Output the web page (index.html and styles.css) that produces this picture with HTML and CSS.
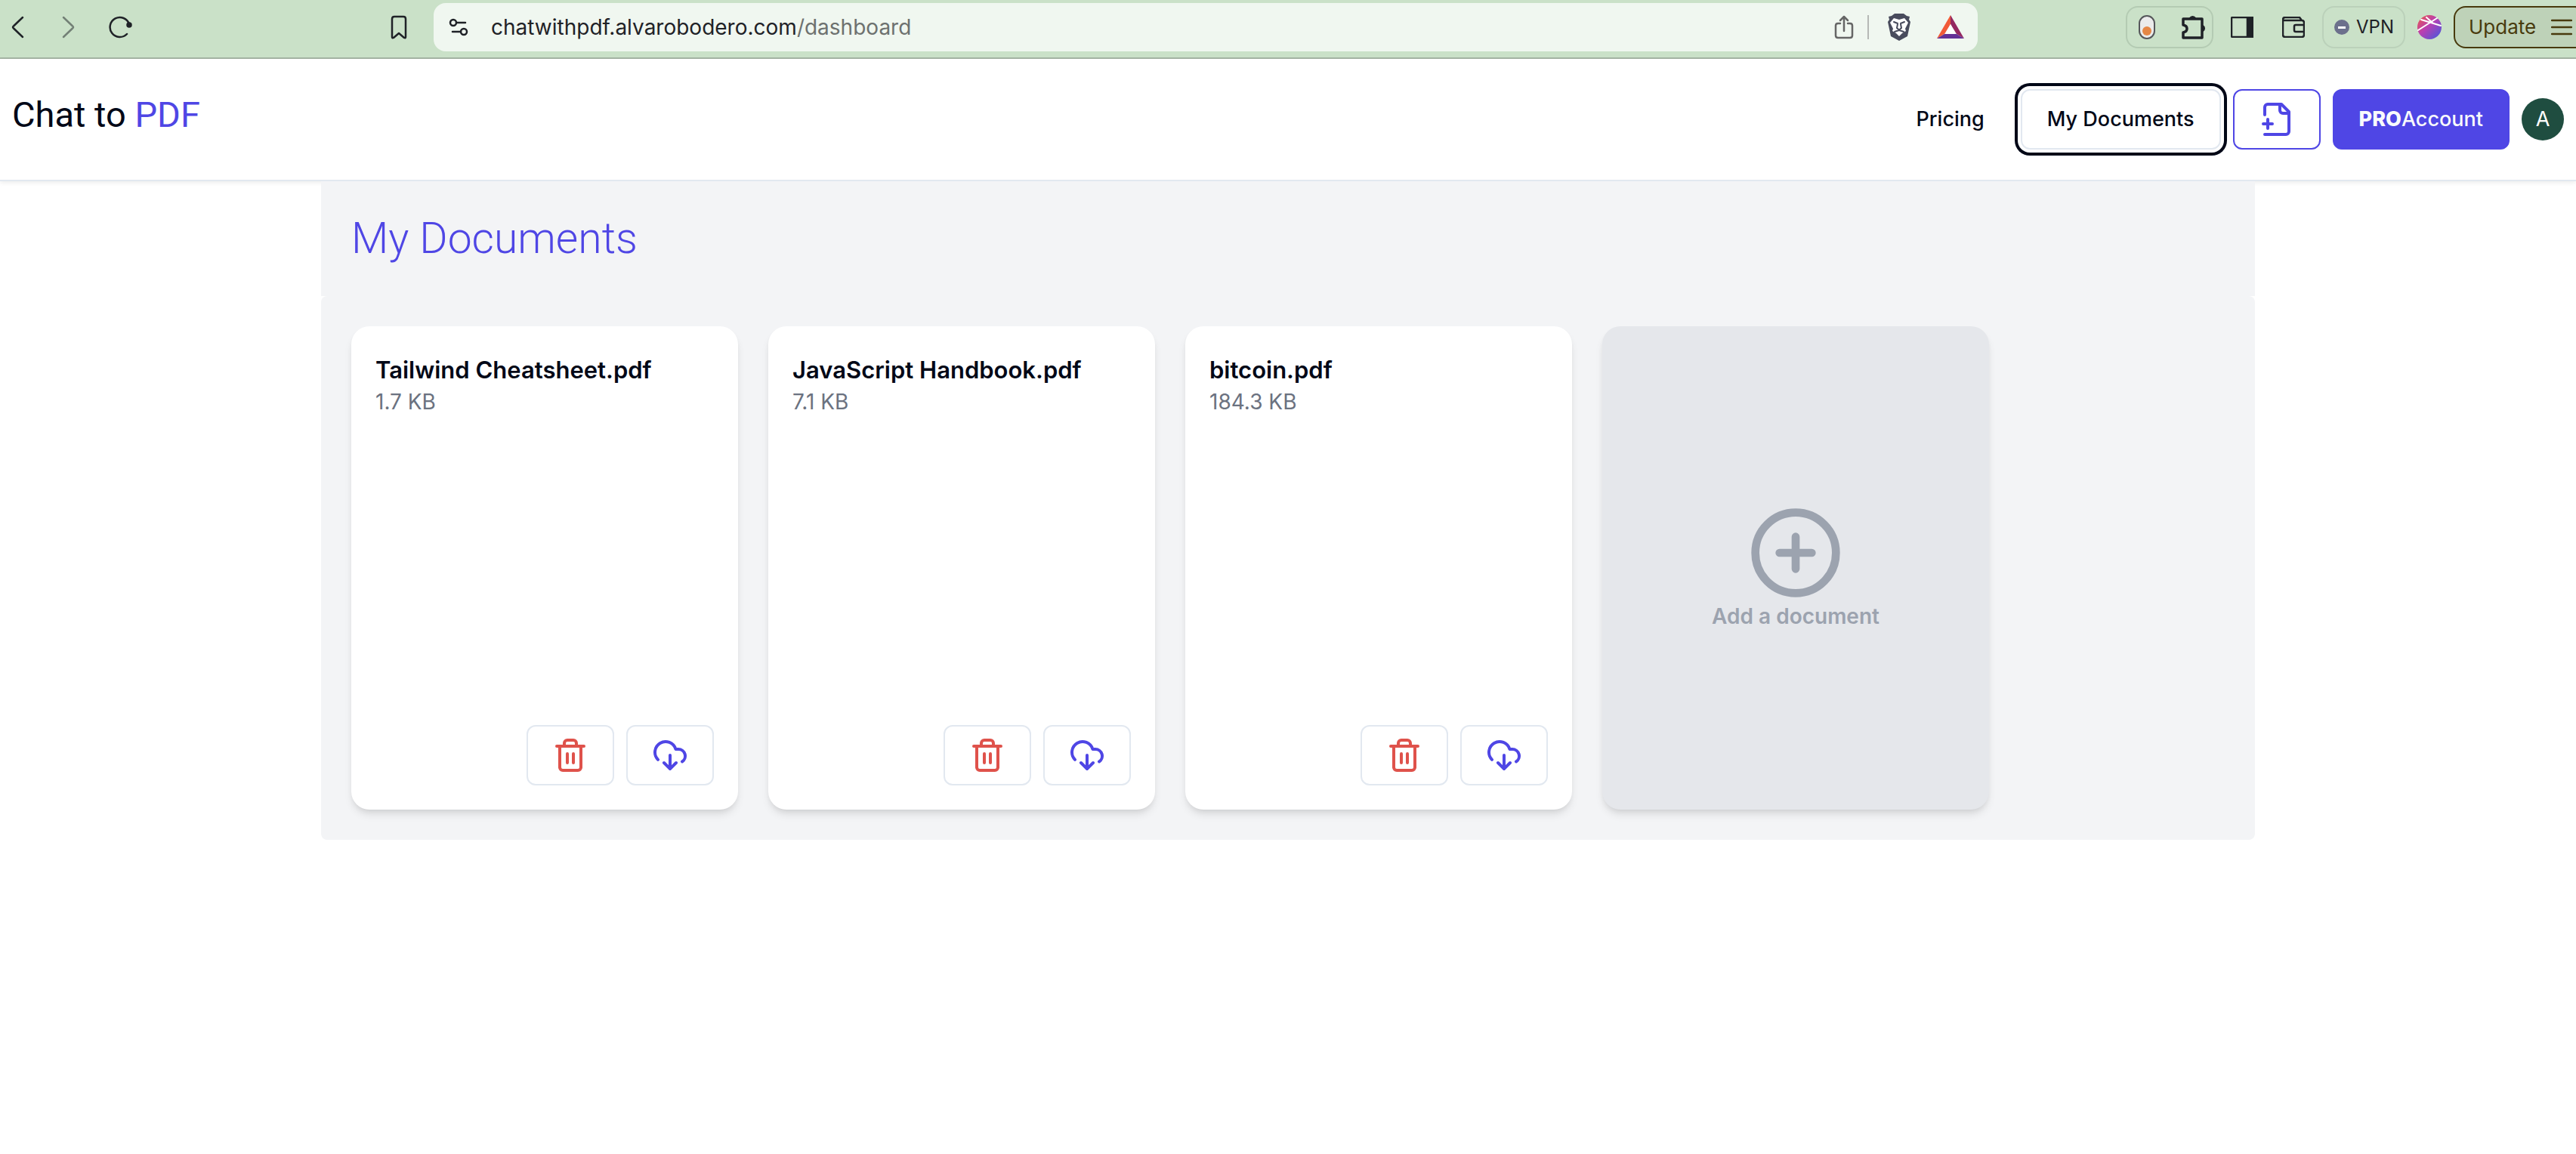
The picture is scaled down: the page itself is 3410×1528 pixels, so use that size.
FILE: index.html
```html
<!DOCTYPE html>
<html lang="en">
<head>
<meta charset="utf-8">
<title>Chat to PDF</title>
<link rel="stylesheet" href="styles.css">
</head>
<body>
<svg class="sprite" aria-hidden="true">
  <symbol id="trash" viewBox="0 0 24 24"><path d="M3 6h18M19 6v14a2 2 0 0 1-2 2H7a2 2 0 0 1-2-2V6M8 6V4a2 2 0 0 1 2-2h4a2 2 0 0 1 2 2v2M10 11v6M14 11v6"/></symbol>
  <symbol id="cloud" viewBox="0 0 24 24"><path d="M4 14.899A7 7 0 1 1 15.710 8h1.790a4.500 4.500 0 0 1 2.500 8.242M12 12v9M8 17l4 4 4-4"/></symbol>
</svg>

<div class="toolbar">
  <div class="tools-left">
    <button class="tool" aria-label="Back"><svg width="24" height="32" viewBox="0 0 24 32"><path d="M18 3 6 14.500q-2 1.500 0 3L18 29"/></svg></button>
    <button class="tool faded" aria-label="Forward"><svg width="24" height="32" viewBox="0 0 24 32"><path d="m6 3 12 11.500q2 1.500 0 3L6 29"/></svg></button>
    <button class="tool" aria-label="Reload"><svg width="32" height="32" viewBox="0 0 32 32"><path d="M24 25A13 13 0 1 1 27 12"/><circle cx="27" cy="13" r="2.500" class="solid"/></svg></button>
    <button class="tool bookmark" aria-label="Bookmark"><svg width="24" height="32" viewBox="0 0 24 32"><path d="M3 5q0-3 3-3h12q3 0 3 3v24q0 2-2 1l-7-6-7 6q-2 1-2-1z"/></svg></button>
  </div>
  <div class="address">
    <svg width="28" height="28" viewBox="0 0 28 28"><circle cx="6" cy="8" r="4"/><path d="M11 8h11M5 20h11"/><circle cx="20" cy="20" r="4"/></svg>
    <span class="url">chatwithpdf.alvarobodero.com<span class="path">/dashboard</span></span>
    <svg class="share" width="32" height="34" viewBox="0 0 32 34"><path d="M12 12H9q-3 0-3 3v13q0 3 3 3h16q3 0 3-3V15q0-3-3-3h-3M17 22V3M12 8l5-5 5 5"/></svg>
    <span class="divider"></span>
    <svg class="brave" width="32" height="36" viewBox="0 0 32 36"><path fill="#484b5c" d="M10 0h12l4 3 4 1-1 4 2 3-4 19-11 6-11-6-4-19 2-3-1-4 4-1z"/><path fill="#fff" d="m9 6 7 2 7-2 5 6-4 8 1 3-5 3-4 4-4-4-5-3 1-3-4-8z"/><path class="mane" d="m9 11 5 2M23 11l-5 2M14 14l-1 5 3 3 3-3-1-5M10 24l6-2 6 2"/></svg>
    <svg class="bat" width="36" height="32" viewBox="0 0 36 32"><path fill="#f15a38" d="M18 0v12l-8 13L0 31z"/><path fill="#942861" d="m18 0 18 31-10-6-8-13z"/><path fill="#643096" d="M0 31 10 25h16l10 6z"/><path fill="#fff" d="m18 12 7 13H11z"/></svg>
  </div>
  <div class="tools-right">
    <div class="group extensions">
      <svg width="22" height="32" viewBox="0 0 22 32"><rect x="1" y="1" width="20" height="30" rx="10" fill="#ebebeb" stroke="#55565a" stroke-width="2"/><circle cx="11" cy="21" r="6" fill="#e58746"/></svg>
      <svg width="34" height="34" viewBox="0 0 34 34"><path class="thick" d="M3 6h25v25H3v-7q5-1 5-5t-5-5z"/><path class="blob" d="M12 5a4 4 0 0 1 7 0zM29 15a4 4 0 0 1 0 7z"/></svg>
    </div>
    <svg class="side" width="30" height="28" viewBox="0 0 30 28"><rect x="1" y="1" width="28" height="26" rx="1"/><path class="solid" d="M22 1h7v26h-7z"/></svg>
    <svg class="wallet" width="30" height="28" viewBox="0 0 30 28"><path d="M26 5 23 1H4Q1 1 1 4v20q0 3 3 3h22q3 0 3-3V8q0-3-3-3H1M29 11H18q-2 0-2 2v5q0 2 2 2h11"/></svg>
    <button class="group vpn"><svg width="20" height="20" viewBox="0 0 20 20"><circle cx="10" cy="10" r="10" fill="#6c708c"/><path d="M5 9h10v3H5z" fill="#fff"/></svg>VPN</button>
    <svg class="ball" width="32" height="32" viewBox="0 0 32 32"><defs><linearGradient id="g" x1="0" y1="0" x2="1" y2="1"><stop offset="0" stop-color="#ef5a43"/><stop offset=".45" stop-color="#b93fb2"/><stop offset="1" stop-color="#3e5ae0"/></linearGradient></defs><circle cx="16" cy="16" r="16" fill="url(#g)"/><path class="seam" d="M5 6l26 8M1 20 26 4M12 3l9 8"/></svg>
    <button class="update">Update<svg width="28" height="24" viewBox="0 0 28 24"><path d="M1 3h26M1 12h26M1 21h26"/></svg></button>
  </div>
</div>

<header class="header">
  <a class="logo" href="#">Chat to <span>PDF</span></a>
  <nav class="nav">
    <a class="link" href="#">Pricing</a>
    <a class="btn wide focused" href="#">My Documents</a>
    <button class="btn accent" aria-label="New document"><svg class="icon" viewBox="0 0 24 24"><path d="M4 9V4a2 2 0 0 1 2-2h9l5 5v13a2 2 0 0 1-2 2H4M14 2v4a2 2 0 0 0 2 2h4M3 15h6M6 12v6"/></svg></button>
    <button class="btn wide pro"><b>PRO</b>Account</button>
    <button class="avatar">A</button>
  </nav>
</header>

<main class="container">
  <h1 class="title">My Documents</h1>
  <div class="grid">
    <article class="card">
      <h2>Tailwind Cheatsheet.pdf</h2>
      <p>1.7 KB</p>
      <div class="actions">
        <button class="btn danger" aria-label="Delete"><svg class="icon"><use href="#trash"/></svg></button>
        <button class="btn save" aria-label="Download"><svg class="icon"><use href="#cloud"/></svg></button>
      </div>
    </article>
    <article class="card">
      <h2>JavaScript Handbook.pdf</h2>
      <p>7.1 KB</p>
      <div class="actions">
        <button class="btn danger" aria-label="Delete"><svg class="icon"><use href="#trash"/></svg></button>
        <button class="btn save" aria-label="Download"><svg class="icon"><use href="#cloud"/></svg></button>
      </div>
    </article>
    <article class="card">
      <h2>bitcoin.pdf</h2>
      <p>184.3 KB</p>
      <div class="actions">
        <button class="btn danger" aria-label="Delete"><svg class="icon"><use href="#trash"/></svg></button>
        <button class="btn save" aria-label="Download"><svg class="icon"><use href="#cloud"/></svg></button>
      </div>
    </article>
    <button class="card add">
      <svg viewBox="0 0 24 24"><circle cx="12" cy="12" r="10"/><path d="M8 12h8M12 8v8"/></svg>
      Add a document
    </button>
  </div>
</main>
</body>
</html>
```
FILE: styles.css
```css
* { box-sizing: border-box; }
body { margin: 0; background: #fff; color: #020817; font: 28px/40px Inter, "Liberation Sans", sans-serif; }
button { font: inherit; color: inherit; margin: 0; padding: 0; border: 0; background: none; }
a { color: inherit; text-decoration: none; }
svg { display: block; flex: none; fill: none; stroke-linecap: round; stroke-linejoin: round; }
.sprite { position: absolute; width: 0; height: 0; }

/* Browser toolbar */
.toolbar { display: flex; align-items: center; height: 78px; padding-bottom: 4px; background: #cae1c8; border-bottom: 2px solid #a6b5a5; color: #1f2227; overflow: hidden; }
.toolbar svg { stroke: #1f2227; stroke-width: 2.5; }
.toolbar .solid { fill: #1f2227; }
.toolbar .blob { fill: #1f2227; stroke-width: 2; }
.toolbar .thick { stroke-width: 3.5; }
.tools-left { display: flex; align-items: center; gap: 42px; flex: none; width: 574px; padding: 0 34px 0 12px; }
.faded { opacity: .5; }
.bookmark { margin-left: auto; }
.address { display: flex; align-items: center; flex: 1; height: 64px; padding: 0 18px 0 20px; border-radius: 16px; background: #f0f7f0; }
.url { flex: 1; margin-left: 28px; }
.path { color: #6d716f; }
.toolbar .share { stroke: #666; }
.divider { width: 2px; height: 32px; margin: 0 24px 0 16px; background: #b6b9b6; }
.toolbar .brave, .toolbar .bat { stroke: none; }
.toolbar .mane { stroke: #484b5c; stroke-width: 2; }
.bat { margin-left: 34px; }
.tools-right { display: flex; align-items: center; flex: none; width: 792px; padding-left: 196px; }
.group { display: flex; align-items: center; flex: none; height: 56px; border: 2px solid #b4cbb3; border-radius: 16px; }
.extensions { gap: 34px; width: 116px; padding-left: 15px; }
.extensions svg:first-child { stroke: none; }
.side { margin-left: 23px; }
.wallet { margin-left: 38px; }
.vpn { gap: 9px; width: 110px; margin-left: 23px; padding-left: 14px; font-size: 24px; border-color: #bbd1ba; }
.toolbar .vpn svg { stroke: none; }
.ball { margin-left: 16px; }
.toolbar .ball { stroke: none; }
.ball .seam { stroke: #fff; stroke-width: 2; }
.update { display: flex; align-items: center; gap: 20px; flex: none; width: 176px; height: 56px; margin-left: 16px; padding-left: 18px; border: 2px solid #483a0d; border-radius: 16px; background: #bed2b8; color: #483a0d; font-size: 26px; }
.toolbar .update svg { stroke: #483a0d; }

/* Site header */
.header { display: flex; justify-content: space-between; height: 162px; padding: 40px 16px; border-bottom: 2px solid #e2e8f0; box-shadow: 0 2px 6px rgba(0, 0, 0, .08); }
.logo { font-family: Roboto, Inter, sans-serif; font-size: 47px; line-height: 68px; }
.logo span { color: #4f46e5; }
.nav { display: flex; align-items: center; gap: 16px; font-size: 27px; font-weight: 500; }
.link { margin-right: 32px; }
.btn { display: flex; align-items: center; justify-content: center; height: 80px; padding: 0 32px; border: 2px solid #e2e8f0; border-radius: 12px; background: #fff; }
.wide { padding: 0 33px; }
.focused { box-shadow: 0 0 0 4px #fff, 0 0 0 8px #020817; }
.icon { width: 48px; height: 48px; stroke: currentColor; stroke-width: 2; }
.accent { border-color: #4f46e5; color: #4f46e5; }
.pro { border-color: #4f46e5; background: #4f46e5; color: #f8fafc; }
.pro b { font-weight: 800; }
.avatar { width: 56px; height: 56px; border-radius: 50%; background: #1f4d40; color: #fff; font-weight: 400; }

/* Documents */
.container { max-width: 2560px; margin: 0 auto; }
.title { margin: 0; padding: 40px; background: #f3f4f6; color: #4f46e5; font-family: Roboto, Inter, sans-serif; font-size: 57px; font-weight: 300; line-height: 72px; }
.grid { display: grid; grid-template-columns: repeat(auto-fill, 512px); gap: 40px; padding: 40px; border-radius: 8px; background: #f3f4f6; }
.card { display: flex; flex-direction: column; height: 640px; padding: 32px; border-radius: 24px; background: #fff; box-shadow: 0 8px 12px -2px rgba(0, 0, 0, .1), 0 4px 8px -4px rgba(0, 0, 0, .1); }
.card h2 { margin: 4px 0 0; font-size: 31px; font-weight: 600; line-height: 44px; }
.card p { margin: 0; color: #6b7280; }
.actions { display: flex; justify-content: flex-end; gap: 16px; margin-top: auto; }
.danger { color: #df524b; }
.save { color: #4f46e5; }
.add { align-items: center; justify-content: center; background: #e5e7eb; color: #9ca3af; font-weight: 600; }
.add svg { width: 128px; height: 128px; stroke: currentColor; stroke-width: 2; }
```
